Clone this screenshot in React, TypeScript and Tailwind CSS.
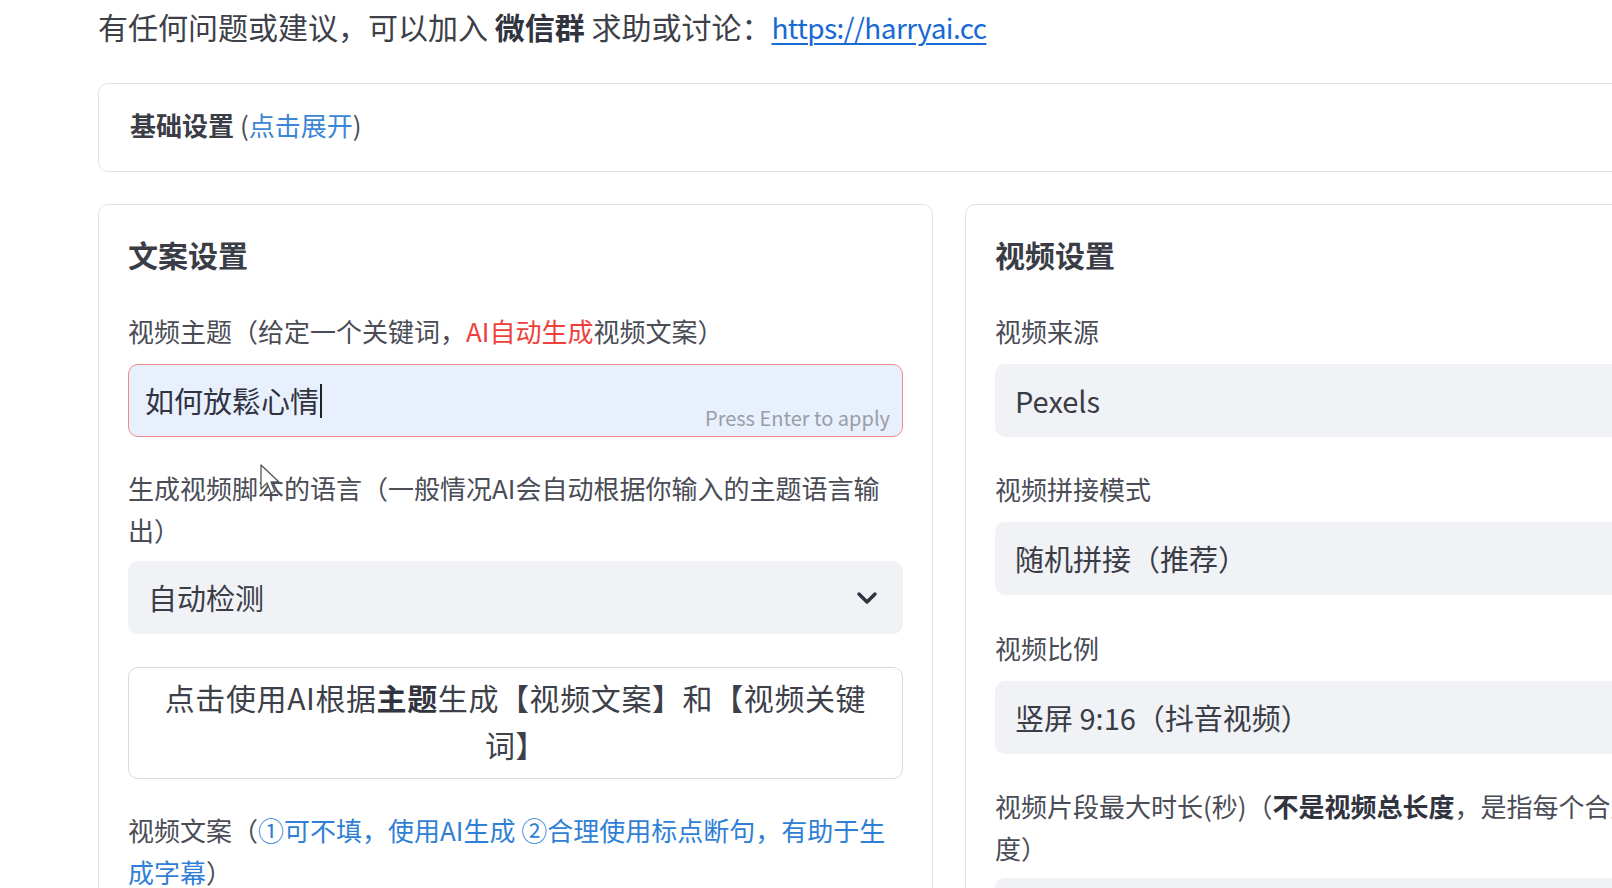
import React from "react";

const font = { fontFamily: '"Noto Sans CJK SC", "Noto Sans", sans-serif' };

function Label({ children }: { children: React.ReactNode }) {
  return <div className="text-[26px] leading-[42px] text-[#4a4c56]">{children}</div>;
}

function SelectBox({ value, chevron = false }: { value: string; chevron?: boolean }) {
  return (
    <div className="flex h-[73px] items-center justify-between rounded-[10px] bg-[#f0f2f6] pl-[20px] pr-[25px]">
      <span className="text-[29px] text-[#3a3c46]">{value}</span>
      {chevron && (
        <svg width="22" height="14" viewBox="0 0 22 14" className="text-[#31333f]">
          <polyline points="3,3 11,11 19,3" fill="none" stroke="currentColor" strokeWidth="3.5" strokeLinecap="round" strokeLinejoin="round" />
        </svg>
      )}
    </div>
  );
}

export default function App() {
  return (
    <div className="relative h-[888px] w-[1612px] overflow-hidden bg-white" style={font}>
      <div className="w-[1800px] pl-[98px]">
        <div className="pt-[6px] text-[30px] leading-[40px] text-[#3d3f49]">
          有任何问题或建议，可以加入 <b className="font-bold text-[#31333f]">微信群</b> 求助或讨论：
          <span className="text-[28px] tracking-[-0.6px] text-[#1769d3] underline decoration-[1.5px] underline-offset-[4px]">https://harryai.cc</span>
        </div>

        <div className="mt-[36px] flex h-[89px] w-[1707px] items-center rounded-[10px] border border-[#dfe1e6] px-[31px] pb-[6px] text-[26px]">
          <span className="font-bold text-[#3a3c46]">基础设置</span>
          <span className="ml-[6px] text-[#4a4c56]">(</span>
          <span className="text-[#3c86d6]">点击展开</span>
          <span className="text-[#4a4c56]">)</span>
        </div>

        <div className="mt-[32px] flex gap-[32px]">
          {/* Left card */}
          <div className="h-[760px] w-[839px] rounded-[10px] border border-[#e0e2e7] px-[29px]">
            <div className="pt-[29px] text-[30px] font-bold leading-[40px] text-[#3a3c46]">文案设置</div>

            <div className="mt-[36px]">
              <Label>
                视频主题（给定一个关键词，<span className="text-[#f0403c]">AI自动生成</span>视频文案）
              </Label>
            </div>
            <div className="relative mt-[12px] flex h-[73px] items-center rounded-[10px] border border-[#ee8a8a] bg-[#e8f0fe] px-[16px]">
              <span className="text-[29px] text-[#31333f]">如何放鬆心情</span>
              <span className="ml-[1px] inline-block h-[34px] w-[2px] bg-[#222]" />
              <span className="absolute bottom-[3px] right-[12px] text-[20px] text-[#9a9da6]">Press Enter to apply</span>
            </div>

            <div className="mt-[30px]">
              <Label>生成视频脚本的语言（一般情况AI会自动根据你输入的主题语言输出）</Label>
            </div>
            <div className="mt-[10px]">
              <SelectBox value="自动检测" chevron />
            </div>

            <div className="mt-[33px] flex h-[112px] flex-col items-center justify-center rounded-[10px] border border-[#d9dbe0] pb-[4px] text-center text-[30px] leading-[47px] tracking-[0.6px] text-[#3d3f49]">
              <div className="whitespace-nowrap">
                点击使用AI根据<b className="font-bold text-[#31333f]">主题</b>生成【视频文案】和【视频关键
              </div>
              <div>词】</div>
            </div>

            <div className="mt-[30px]">
              <Label>
                视频文案（<span className="text-[#2f7fd6]">①可不填，使用AI生成 ②合理使用标点断句，有助于生成字幕</span>）
              </Label>
            </div>
          </div>

          {/* Right card */}
          <div className="h-[760px] w-[839px] rounded-[10px] border border-[#e0e2e7] px-[29px]">
            <div className="pt-[29px] text-[30px] font-bold leading-[40px] text-[#3a3c46]">视频设置</div>

            <div className="mt-[36px]">
              <Label>视频来源</Label>
            </div>
            <div className="mt-[12px]">
              <SelectBox value="Pexels" />
            </div>

            <div className="mt-[31px]">
              <Label>视频拼接模式</Label>
            </div>
            <div className="mt-[12px]">
              <SelectBox value="随机拼接（推荐）" />
            </div>

            <div className="mt-[32px]">
              <Label>视频比例</Label>
            </div>
            <div className="mt-[12px]">
              <SelectBox value="竖屏 9:16（抖音视频）" />
            </div>

            <div className="mt-[31px]">
              <Label>
                视频片段最大时长(秒)（<b className="font-bold text-[#31333f]">不是视频总长度</b>，是指每个合成片段的长度）
              </Label>
            </div>
            <div className="mt-[9px]">
              <SelectBox value="3" />
            </div>
          </div>
        </div>
      </div>

      {/* mouse cursor */}
      <svg className="absolute left-[260px] top-[464px]" width="22" height="32" viewBox="0 0 22 32">
        <path d="M1 1 L1 25 L7 19 L11 29 L15 27.5 L11 18 L19 18 Z" fill="#ffffff" stroke="#555" strokeWidth="1.3" strokeLinejoin="round" />
      </svg>
    </div>
  );
}
